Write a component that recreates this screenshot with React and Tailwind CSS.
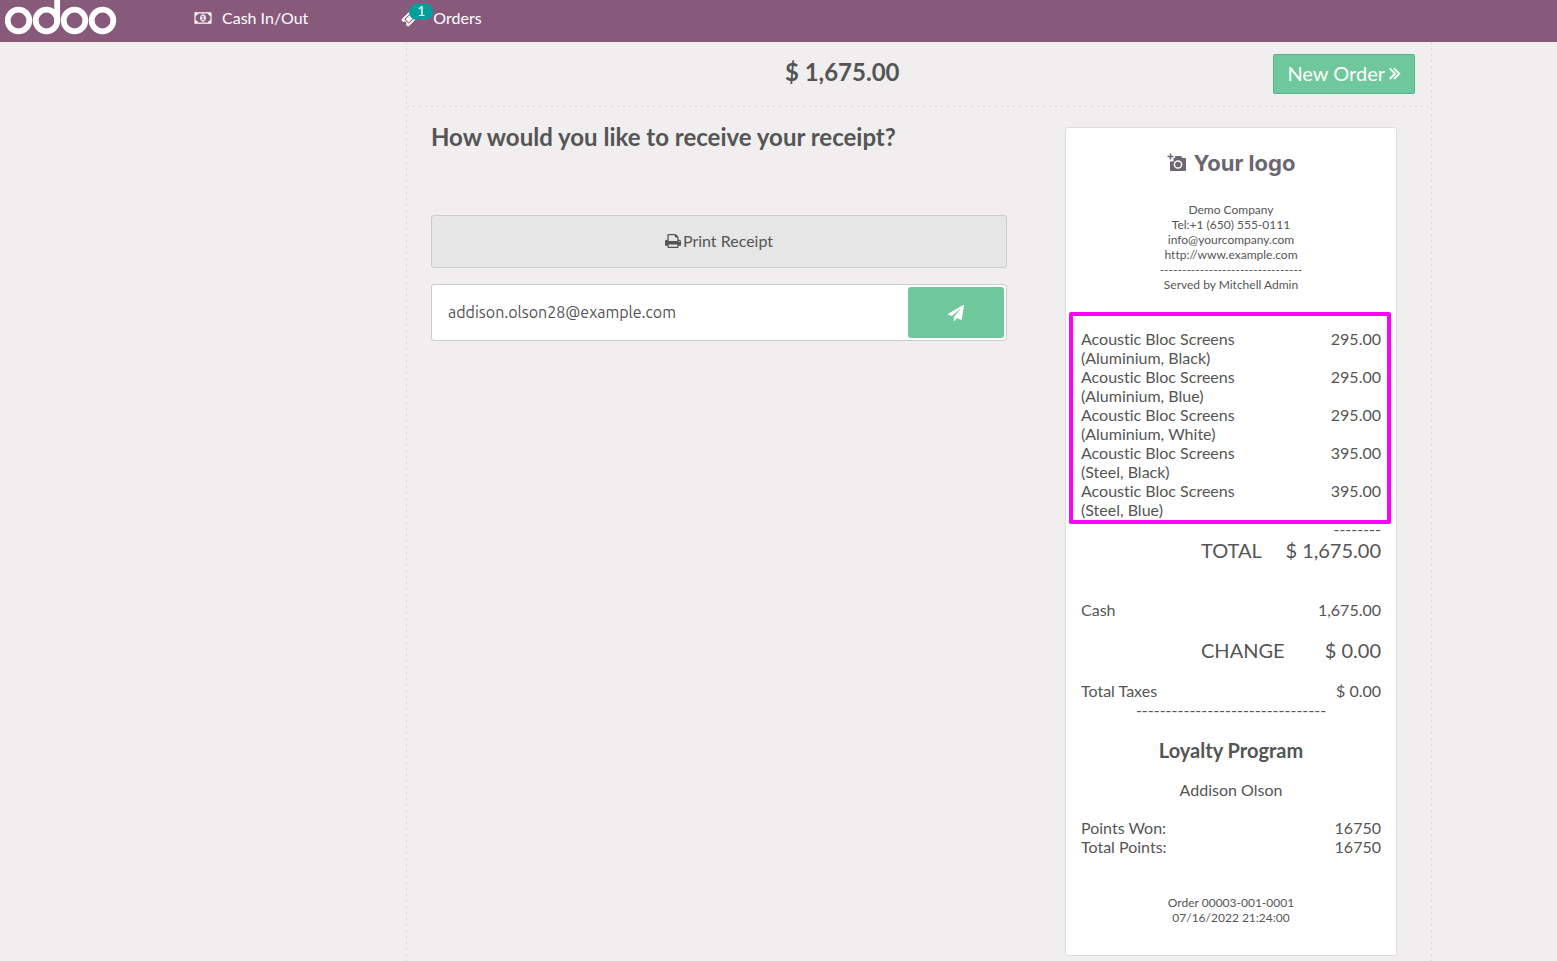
import { useState } from 'react';

const orderLines = [
  { name: 'Acoustic Bloc Screens', variant: '(Aluminium, Black)', price: '295.00' },
  { name: 'Acoustic Bloc Screens', variant: '(Aluminium, Blue)', price: '295.00' },
  { name: 'Acoustic Bloc Screens', variant: '(Aluminium, White)', price: '295.00' },
  { name: 'Acoustic Bloc Screens', variant: '(Steel, Black)', price: '395.00' },
  { name: 'Acoustic Bloc Screens', variant: '(Steel, Blue)', price: '395.00' },
];

const Logo = () => (
  <svg className="w-28 h-[42px]" viewBox="0 0 112 42" fill="none" stroke="white" strokeWidth="5.8" role="img" aria-label="odoo">
    <circle cx="13.5" cy="20.5" r="10.8" />
    <circle cx="41.5" cy="20.5" r="10.8" />
    <circle cx="69.5" cy="20.5" r="10.8" />
    <circle cx="97.5" cy="20.5" r="10.8" />
    <path d="M52.2 -2V20.5" strokeLinecap="round" />
  </svg>
);

const MoneyIcon = () => (
  <svg className="w-[18px] h-4" viewBox="0 0 1920 1792" fill="currentColor" aria-hidden="true">
    <path d="M768 1152h384v-96h-128v-448h-114l-148 137 77 80q42-37 55-57h2v288h-128v96zM1280 896q0 70-21 142t-59.5 134-101.5 101-138 39-138-39-101.5-101-59.5-134-21-142 21-142 59.5-134 101.5-101 138-39 138 39 101.5 101 59.5 134 21 142zM1792 1152v-512q-106 0-181-75t-75-181h-1152q0 106-75 181t-181 75v512q106 0 181 75t75 181h1152q0-106 75-181t181-75zM1920 320v1152q0 26-19 45t-45 19h-1792q-26 0-45-19t-19-45v-1152q0-26 19-45t45-19h1792q26 0 45 19t19 45z" />
  </svg>
);

const TicketIcon = () => (
  <svg className="w-[18px] h-[18px]" viewBox="0 0 1792 1792" fill="currentColor" aria-hidden="true">
    <path d="M1024 452l316 316-572 572-316-316zM813 1431l618-618q19-19 19-45t-19-45l-362-362q-18-18-45-18t-45 18l-618 618q-19 19-19 45t19 45l362 362q18 18 45 18t45-18zM1702 794l-907 908q-37 37-90.5 37t-90.5-37l-126-126q56-56 56-136t-56-136-136-56-136 56l-125-126q-37-37-37-90.5t37-90.5l907-906q37-37 90.5-37t90.5 37l125 125q-56 56-56 136t56 136 136 56 136-56l126 125q37 37 37 90.5t-37 90.5z" />
  </svg>
);

const PrintIcon = () => (
  <svg className="w-4 h-3.5" viewBox="64 128 1664 1536" preserveAspectRatio="none" fill="currentColor" aria-hidden="true">
    <path d="M448 1536h896v-256h-896v256zm0-640h896v-384h-160q-40 0-68-28t-28-68v-160h-640v640zm1152 64q0-26-19-45t-45-19-45 19-19 45 19 45 45 19 45-19 19-45zm128 0v416q0 13-9.5 22.5t-22.5 9.5h-224v160q0 40-28 68t-68 28h-960q-40 0-68-28t-28-68v-160h-224q-13 0-22.5-9.5t-9.500-22.5v-416q0-79 56.5-135.5t135.5-56.5h64v-544q0-40 28-68t68-28h672q40 0 88 20t76 48l152 152q28 28 48 76t20 88v256h64q79 0 135.5 56.5t56.5 135.5z" />
  </svg>
);

const PlaneIcon = () => (
  <svg className="w-4 h-4" viewBox="0 0 1792 1792" fill="currentColor" aria-hidden="true">
    <path d="M1764 11q33 24 27 64l-256 1536q-5 29-32 45-14 8-31 8-11 0-24-5l-453-185-242 295q-18 23-49 23-13 0-22-4-19-7-30.5-23.5t-11.5-36.5v-349l864-1059-1069 925-395-162q-37-14-40-55-2-40 32-59l1664-960q15-9 32-9 20 0 36 11z" />
  </svg>
);

const AngleDoubleIcon = () => (
  <svg className="w-3 h-5" viewBox="384 0 1024 1792" fill="currentColor" stroke="currentColor" strokeWidth="40" aria-hidden="true">
    <path d="M979 960q0 13-10 23l-466 466q-10 10-23 10t-23-10l-50-50q-10-10-10-23t10-23l393-393-393-393q-10-10-10-23t10-23l50-50q10-10 23-10t23 10l466 466q10 10 10 23zm384 0q0 13-10 23l-466 466q-10 10-23 10t-23-10l-50-50q-10-10-10-23t10-23l393-393-393-393q-10-10-10-23t10-23l50-50q10-10 23-10t23 10l466 466q10 10 10 23z" />
  </svg>
);

const CameraIcon = () => (
  <svg className="w-5 h-5" viewBox="0 0 20 20" fill="none" aria-hidden="true">
    <path
      d="M8 3h6l1.500 2H18a1 1 0 0 1 1 1v11a1 1 0 0 1-1 1H4a1 1 0 0 1-1-1V8.500h3.500V5H8z"
      fill="#6b6670"
    />
    <path d="M3.500 0.500v6M0.500 3.500h6" stroke="#6b6670" strokeWidth="1.5" />
    <circle cx="11" cy="11.5" r="3.6" stroke="white" strokeWidth="1.5" />
  </svg>
);

const DashedColumn = () => (
  <div className="w-px bg-[repeating-linear-gradient(to_bottom,#d8d8d8_0_2px,transparent_2px_6px)]"></div>
);

const TopBar = () => (
  <header className="flex items-center h-[42px] pl-[5px] bg-[#875a7b] text-white">
    <Logo />
    <nav className="flex items-center pb-1.5">
      <button type="button" className="ml-[77px] flex items-center gap-2.5">
        <MoneyIcon />
        Cash In/Out
      </button>
      <button type="button" className="relative ml-[93px] flex items-center gap-3.5">
        <TicketIcon />
        <span className="absolute left-2 -top-0.5 w-6 h-4 rounded-full bg-[#00a09d] text-sm leading-[14px] text-center">1</span>
        Orders
      </button>
    </nav>
  </header>
);

const Row = ({ label, value }) => (
  <div className="flex justify-between">
    <span>{label}</span>
    <span>{value}</span>
  </div>
);

const BigRow = ({ label, value }) => (
  <div className="flex justify-between pl-[120px] text-xl leading-6">
    <span>{label}</span>
    <span>{value}</span>
  </div>
);

const Receipt = () => (
  <section className="w-full max-w-[332px] px-[15px] pt-[19px] pb-[30px] bg-white border border-[#dcdcdc] rounded-[3px] leading-[19px]">
    <div className="flex justify-center items-center gap-[7px] h-8 text-[22px] font-bold text-[#6b6670] font-['Inter',sans-serif]">
      <CameraIcon />
      <span>Your logo</span>
    </div>

    <div className="mt-[23px] text-center text-xs leading-[15px]">
      <div>Demo Company</div>
      <div>Tel:+1 (650) 555-0111</div>
      <div>info@yourcompany.com</div>
      <div>http://www.example.com</div>
      <div>--------------------------------</div>
      <div>Served by Mitchell Admin</div>
    </div>

    <div className="relative mt-[37px]">
      <table className="w-full">
        <tbody>
          {orderLines.map((line) => (
            <tr key={line.variant} className="align-top">
              <td>
                {line.name}
                <br />
                {line.variant}
              </td>
              <td className="text-right">{line.price}</td>
            </tr>
          ))}
        </tbody>
      </table>
      <div className="absolute -left-3 -right-2.5 -top-[17px] -bottom-[5px] border-4 border-[#ff00ff] rounded-[2px]"></div>
    </div>

    <div className="text-right">--------</div>
    <BigRow label="TOTAL" value="$ 1,675.00" />

    <div className="mt-[38px]">
      <Row label="Cash" value="1,675.00" />
    </div>

    <div className="my-[19px]">
      <BigRow label="CHANGE" value="$ 0.00" />
    </div>

    <Row label="Total Taxes" value="$ 0.00" />

    <div className="text-center">
      <div>--------------------------------</div>
      <h3 className="mt-[19px] text-xl leading-6 font-bold">Loyalty Program</h3>
      <div className="mt-[18px] mb-[19px]">Addison Olson</div>
    </div>

    <Row label="Points Won:" value="16750" />
    <Row label="Total Points:" value="16750" />

    <div className="mt-[39px] text-center text-xs leading-[15px]">
      <div>Order 00003-001-0001</div>
      <div>07/16/2022 21:24:00</div>
    </div>
  </section>
);

const App = () => {
  const [email, setEmail] = useState('addison.olson28@example.com');

  return (
    <div className="min-h-screen flex flex-col bg-[#f0eeee] text-[#555] text-base font-['Lato',sans-serif] [font-variant-ligatures:none]">
      <TopBar />
      <div className="flex-1 grid grid-cols-[406fr_minmax(0,1026px)_125fr]">
        <div className="col-start-2 flex">
          <DashedColumn />
          <main className="flex-1 flex flex-col">
            <div className="flex items-center h-16 pl-1 pr-4">
              <h1 className="flex-1 pb-1 text-center text-2xl font-bold">$ 1,675.00</h1>
              <button
                type="button"
                className="flex items-center gap-1 h-10 px-[13px] pb-0.5 text-xl text-white bg-[#6ec89b] border border-[#5cb085] rounded-[2px]"
              >
                New Order
                <AngleDoubleIcon />
              </button>
            </div>
            <div className="h-px bg-[repeating-linear-gradient(to_right,#d8d8d8_0_2px,transparent_2px_6px)]"></div>

            <div className="flex-1 flex">
              <div className="flex-1 px-6 pt-4">
                <h2 className="text-2xl leading-7 font-bold">How would you like to receive your receipt?</h2>
                <button
                  type="button"
                  className="mt-16 pb-0.5 flex items-center justify-center gap-0.5 w-full h-[53px] bg-[#e6e6e6] border border-[#ccc] rounded-[3px]"
                >
                  <PrintIcon />
                  Print Receipt
                </button>
                <form
                  className="mt-4 flex h-[57px] p-0.5 bg-white border border-[#ccc] rounded-[3px]"
                  onSubmit={(e) => e.preventDefault()}
                >
                  <input
                    type="email"
                    aria-label="Email receipt"
                    className="flex-1 min-w-0 px-3.5 pb-0.5 outline-none font-['Ubuntu','Noto_Sans',sans-serif]"
                    value={email}
                    onChange={(e) => setEmail(e.target.value)}
                  />
                  <button
                    type="submit"
                    aria-label="Send"
                    className="flex items-center justify-center w-24 text-white bg-[#6ec89b] rounded-[3px]"
                  >
                    <PlaneIcon />
                  </button>
                </form>
              </div>
              <div className="w-[400px] flex flex-col items-center pt-5 pb-1">
                <Receipt />
              </div>
            </div>
          </main>
          <DashedColumn />
        </div>
      </div>
    </div>
  );
};

export default App;
